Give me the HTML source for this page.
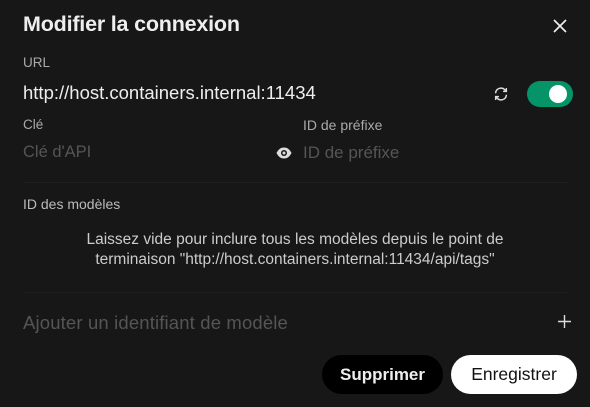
<!DOCTYPE html><html><head><meta charset="utf-8"><style>
body{margin:0;width:590px;height:407px;background:#171717;font-family:"Liberation Sans",sans-serif;position:relative;overflow:hidden;color:#fff}
.a{position:absolute;white-space:nowrap}
</style></head><body>
<div class="a" style="left:23px;top:12px;font-size:21.5px;font-weight:bold;letter-spacing:-0.2px;color:#eee">Modifier la connexion</div>
<svg class="a" style="left:553px;top:19px" width="14" height="14" viewBox="0 0 14 14"><path d="M1 1L13 13M13 1L1 13" stroke="#eee" stroke-width="1.7"/></svg>
<div class="a" style="left:23px;top:55px;font-size:13.5px;color:#aaa">URL</div>
<div class="a" style="left:23px;top:82px;font-size:18.5px;color:#eee">http://host.containers.internal:11434</div>
<svg class="a" style="left:493px;top:86px" width="16" height="16" viewBox="0 0 24 24" fill="none" stroke="#ddd" stroke-width="2.2" stroke-linecap="round"><path d="M4 10a8 8 0 0 1 14-4l2 2M20 4v4h-4M20 14a8 8 0 0 1-14 4l-2-2M4 20v-4h4"/></svg>
<div class="a" style="left:527px;top:81px;width:46px;height:26px;border-radius:13px;background:#059467"></div>
<div class="a" style="left:549px;top:85px;width:18px;height:18px;border-radius:9px;background:#fff"></div>
<div class="a" style="left:23px;top:117px;font-size:13.5px;color:#aaa">Clé</div>
<div class="a" style="left:303px;top:117px;font-size:14px;color:#aaa">ID de préfixe</div>
<div class="a" style="left:23px;top:143px;font-size:16.5px;color:#555">Clé d'API</div>
<div class="a" style="left:303px;top:143px;font-size:17px;color:#555">ID de préfixe</div>
<svg class="a" style="left:276px;top:147px" width="16" height="12" viewBox="0 0 16 12"><path d="M0.5 6C2.5 2 5 0.5 8 0.5S13.5 2 15.5 6C13.5 10 11 11.5 8 11.5S2.5 10 0.5 6Z" fill="#ddd"/><circle cx="8" cy="6" r="3" fill="#171717"/><circle cx="8" cy="6" r="1.5" fill="#ddd"/></svg>
<div class="a" style="left:23px;top:182px;width:544px;height:1px;background:#202020"></div>
<div class="a" style="left:23px;top:196px;font-size:14px;color:#bbb">ID des modèles</div>
<div class="a" style="left:23px;top:230px;width:544px;text-align:center;font-size:15.5px;line-height:20px;color:#ccc;white-space:normal">Laissez vide pour inclure tous les modèles depuis le point de<br>terminaison "http://host.containers.internal:11434/api/tags"</div>
<div class="a" style="left:23px;top:292px;width:544px;height:1px;background:#202020"></div>
<div class="a" style="left:23px;top:312px;font-size:18.5px;letter-spacing:0.15px;color:#555">Ajouter un identifiant de modèle</div>
<svg class="a" style="left:558px;top:315px" width="13" height="13" viewBox="0 0 13 13"><path d="M6.5 0V13M0 6.5H13" stroke="#ddd" stroke-width="1.4"/></svg>
<div class="a" style="left:322px;top:355px;width:121px;height:39px;border-radius:20px;background:#000;font-size:17px;font-weight:bold;line-height:39px;text-align:center;color:#eee">Supprimer</div>
<div class="a" style="left:451px;top:355px;width:126px;height:39px;border-radius:20px;background:#fff;font-size:17.5px;line-height:39px;text-align:center;color:#111">Enregistrer</div>
</body></html>
